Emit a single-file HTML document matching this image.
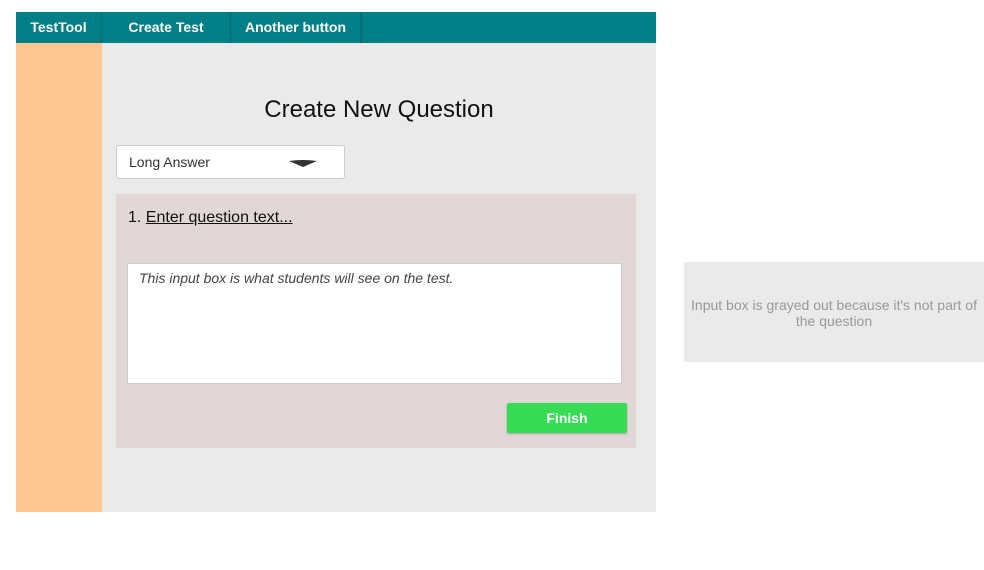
<!DOCTYPE html>
<html><head><style>
body{margin:0;width:984px;height:570px;background:#fff;position:relative;font-family:"Liberation Sans",Arial,sans-serif;overflow:hidden}
.a{position:absolute}
.nav{left:16px;top:12px;width:640px;height:31px;background:#008086}
.btn{top:12px;height:31px;color:#fff;font-weight:bold;font-size:14px;line-height:31px;text-align:center;border-right:1px solid #036e73;box-sizing:border-box}
</style></head><body>
<div class="a nav"></div>
<div class="a btn" style="left:16px;width:86px">TestTool</div>
<div class="a btn" style="left:102px;width:129px">Create Test</div>
<div class="a btn" style="left:231px;width:130px;box-shadow:1px 1px 2px rgba(0,0,0,.2)">Another button</div>
<div class="a" style="left:16px;top:43px;width:86px;height:469px;background:#fec791"></div>
<div class="a" style="left:102px;top:43px;width:554px;height:469px;background:#eaeaea"></div>
<div class="a" style="left:102px;top:96px;width:554px;text-align:center;font-size:24px;color:#111">Create New Question</div>
<div class="a" style="left:116px;top:145px;width:227px;height:32px;background:#fff;border:1px solid #ccc;border-radius:3px"></div>
<div class="a" style="left:129px;top:154px;font-size:14px;color:#333">Long Answer</div>
<svg class="a" style="left:289px;top:160px" width="28" height="8"><path d="M0 1 Q14 -1 28 1 L14 7 Z" fill="#333"/></svg>
<div class="a" style="left:116px;top:194px;width:520px;height:254px;background:#e0d7d6"></div>
<div class="a" style="left:128px;top:209px;font-size:16px;color:#111">1. <span style="text-decoration:underline">Enter question text...</span></div>
<div class="a" style="left:127px;top:263px;width:493px;height:119px;background:#fff;border:1px solid #ccc"></div>
<div class="a" style="left:139px;top:270px;font-size:14px;font-style:italic;color:#444">This input box is what students will see on the test.</div>
<div class="a" style="left:507px;top:403px;width:120px;height:30px;background:#36dc55;border-radius:2px;box-shadow:0 1px 2px rgba(0,0,0,.25);color:#fff;font-weight:bold;font-size:14px;line-height:30px;text-align:center">Finish</div>
<div class="a" style="left:684px;top:262px;width:300px;height:100px;background:#eaeaea"></div>
<div class="a" style="left:684px;top:297px;width:300px;text-align:center;font-size:14px;line-height:16px;color:#999">Input box is grayed out because it's not part of the question</div>
</body></html>
